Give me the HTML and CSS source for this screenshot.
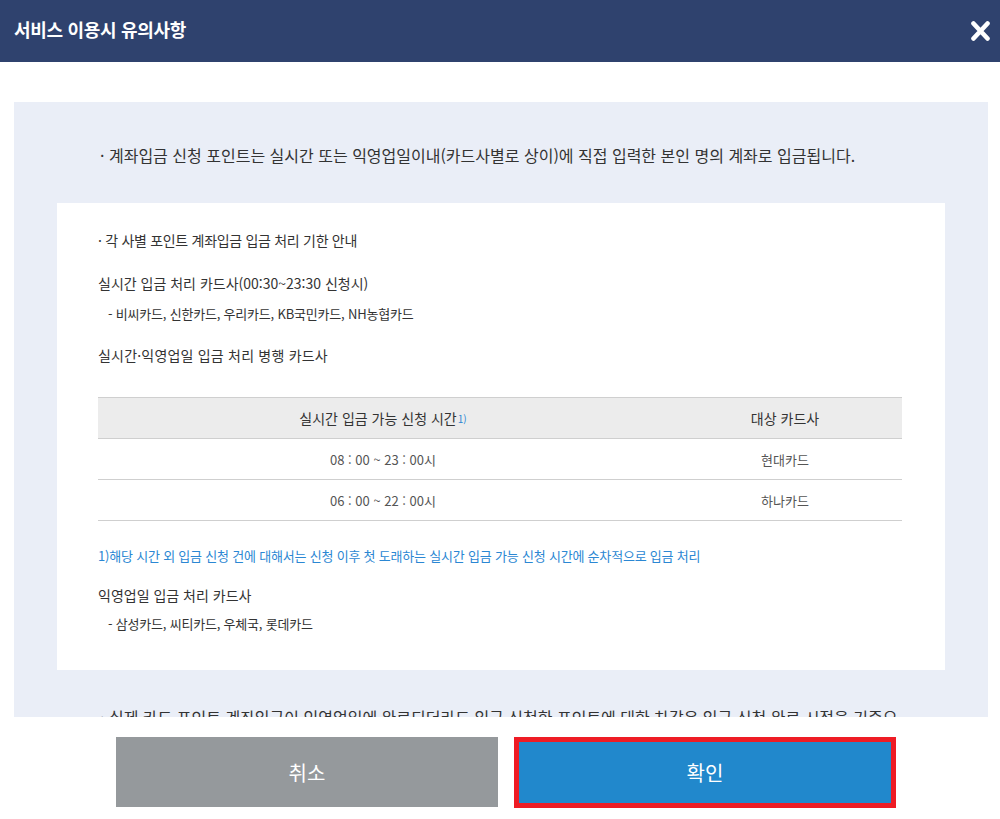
FILE: index.html
```html
<!DOCTYPE html>
<html lang="ko">
<head>
<meta charset="utf-8">
<title>서비스 이용시 유의사항</title>
<link rel="stylesheet" href="styles.css">
</head>
<body>
<div class="header">
  <h1 class="title">서비스 이용시 유의사항</h1>
  <button class="close" aria-label="닫기">
    <svg width="19" height="20" viewBox="0 0 19 20"><path d="M2.5 2.5 L16.5 17.5 M16.5 2.5 L2.5 17.5" stroke="#fff" stroke-width="4.6" stroke-linecap="round" fill="none"/></svg>
  </button>
</div>
<div class="content">
  <div class="scroll">
    <p class="notice">· 계좌입금 신청 포인트는 실시간 또는 익영업일이내(카드사별로 상이)에 직접 입력한 본인 명의 계좌로 입금됩니다.</p>
    <div class="card">
      <p class="card-title">· 각 사별 포인트 계좌입금 입금 처리 기한 안내</p>
      <p class="sub first">실시간 입금 처리 카드사(00:30~23:30 신청시)</p>
      <p class="list">- 비씨카드, 신한카드, 우리카드, KB국민카드, NH농협카드</p>
      <p class="sub mid">실시간·익영업일 입금 처리 병행 카드사</p>
      <table class="tbl">
        <thead>
          <tr><th class="c1">실시간 입금 가능 신청 시간<span class="fn">1)</span></th><th>대상 카드사</th></tr>
        </thead>
        <tbody>
          <tr><td class="c1">08 : 00 ~ 23 : 00시</td><td>현대카드</td></tr>
          <tr><td class="c1">06 : 00 ~ 22 : 00시</td><td>하나카드</td></tr>
        </tbody>
      </table>
      <p class="footnote">1)해당 시간 외 입금 신청 건에 대해서는 신청 이후 첫 도래하는 실시간 입금 가능 신청 시간에 순차적으로 입금 처리</p>
      <p class="sub after-fn">익영업일 입금 처리 카드사</p>
      <p class="list last">- 삼성카드, 씨티카드, 우체국, 롯데카드</p>
    </div>
    <p class="notice second">· 실제 카드 포인트 계좌입금이 익영업일에 완료되더라도 입금 신청한 포인트에 대한 차감은 입금 신청 완료 시점을 기준으로 적용됩니다.</p>
  </div>
</div>
<div class="actions">
  <button class="btn cancel">취소</button>
  <button class="btn confirm">확인</button>
</div>
</body>
</html>
```
FILE: styles.css
```css
* { box-sizing: border-box; }
html, body { margin: 0; padding: 0; background: #fff; }
body {
  font-family: "Noto Sans CJK KR", "Noto Sans", sans-serif;
  color: #333;
  width: 1000px;
  height: 819px;
  overflow: hidden;
}
.header {
  height: 62px;
  background: #2f426e;
  display: flex;
  align-items: center;
  justify-content: space-between;
  padding: 0 10px 4px 14px;
}
.title {
  margin: 0;
  color: #fff;
  font-size: 18px;
  font-weight: 700;
  letter-spacing: -0.3px;
  line-height: 24px;
}
.close {
  background: none;
  border: 0;
  padding: 0;
  width: 19px;
  height: 20px;
  display: block;
  margin-top: 4px;
}
.close svg { display: block; }
.content {
  padding: 40px 12px 0 14px;
}
.scroll {
  height: 615px;
  overflow: hidden;
  background: #eaeef7;
  padding-top: 41px;
}
.notice {
  margin: 0;
  padding: 0 80px 0 86px;
  font-size: 16px;
  line-height: 24px;
  color: #333;
}
.notice.second { margin-top: 35px; }
.card {
  margin: 36px 43px 0;
  background: #fff;
  padding: 26px 42px 36px 41px;
}
.card p { margin: 0; }
.card-title {
  font-size: 14px;
  line-height: 22px;
  letter-spacing: -0.3px;
  color: #333;
}
.sub {
  font-size: 14px;
  line-height: 22px;
  color: #333;
}
.sub.first { margin-top: 21px; }
.sub.mid { margin-top: 20px; letter-spacing: 0.2px; }
.sub.after-fn { margin-top: 18px; }
.list {
  font-size: 13px;
  line-height: 20px;
  letter-spacing: -0.2px;
  color: #333;
  padding-left: 10px;
  margin-top: 10px !important;
}
.list.last { margin-top: 8px !important; }
.tbl {
  width: 804px;
  margin-top: 31px;
  border-collapse: collapse;
}
.tbl th {
  background: #ececec;
  border-top: 1px solid #cfcfcf;
  border-bottom: 1px solid #cfcfcf;
  height: 41px;
  font-size: 14px;
  font-weight: 400;
  color: #333;
  padding: 0;
  text-align: center;
}
.tbl th.c1, .tbl td.c1 { width: 570px; }
.tbl td {
  height: 41px;
  border-bottom: 1px solid #cfcfcf;
  font-size: 13px;
  color: #555;
  text-align: center;
  padding: 0;
}
.fn {
  font-size: 10px;
  color: #2b87d3;
  vertical-align: 1px;
  margin-left: 1px;
}
.footnote {
  margin-top: 25px !important;
  font-size: 13px;
  line-height: 20px;
  letter-spacing: -0.2px;
  color: #2b87d3;
}
.actions {
  display: flex;
  gap: 16px;
  padding: 20px 0 0 116px;
  align-items: flex-start;
}
.btn {
  width: 382px;
  height: 70px;
  border: 0;
  font-family: "Noto Sans CJK KR", "Noto Sans", sans-serif;
  font-size: 20px;
  color: #fff;
  padding: 0;
}
.cancel { background: #95999c; }
.confirm {
  background: #2188cc;
  border: 5px solid #ee1c25;
  height: 71px;
}
```
